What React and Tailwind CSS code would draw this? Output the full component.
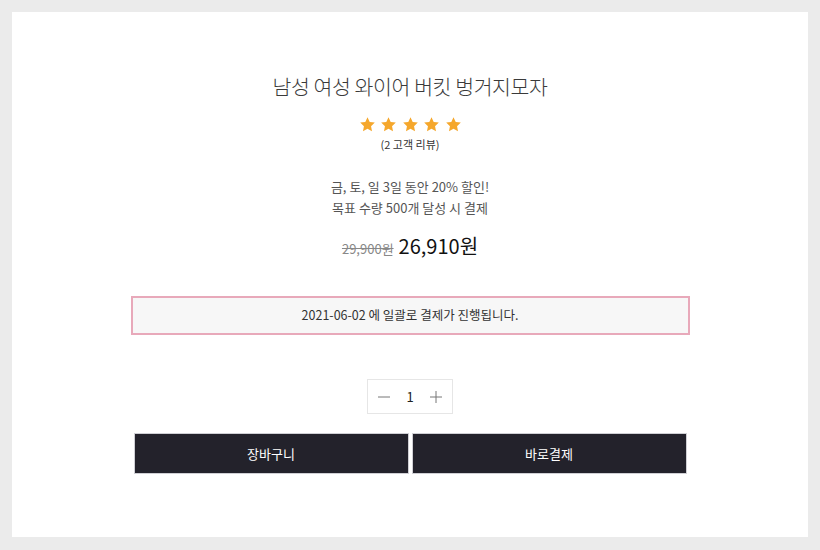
import React from "react";

const Star = () => (
  <svg width="17" height="17" viewBox="0 0 24 24" fill="#f5a72c">
    <path d="M12 1.8l3.1 6.6 7.2.9-5.3 5 1.4 7.1L12 17.9l-6.4 3.5 1.4-7.1-5.3-5 7.2-.9z" />
  </svg>
);

export default function App() {
  return (
    <div
      className="w-[820px] h-[550px] bg-[#ebebeb] pt-[12px] pl-[12px] pr-[12px] pb-[13px]"
      style={{ fontFamily: '"Noto Sans CJK KR", "Noto Sans", sans-serif' }}
    >
      <div className="w-[796px] h-[525px] bg-white flex flex-col items-center">
        <h1 className="mt-[59px] text-[20.5px] leading-[30px] text-[#3a3a3a] font-light tracking-[-0.4px]">
          남성 여성 와이어 버킷 벙거지모자
        </h1>
        <div className="mt-[15px] flex gap-[4.5px]">
          <Star />
          <Star />
          <Star />
          <Star />
          <Star />
        </div>
        <div className="mt-[3px] text-[11px] leading-[16px] text-[#333]">(2 고객 리뷰)</div>
        <div className="mt-[24px] text-[13px] leading-[21px] text-[#555] text-center">
          <div>금, 토, 일 3일 동안 20% 할인!</div>
          <div>목표 수량 500개 달성 시 결제</div>
        </div>
        <div className="mt-[13px] flex items-baseline gap-[5px]">
          <span className="text-[13px] text-[#888] line-through">29,900원</span>
          <span className="text-[20px] leading-[30px] text-[#111]">26,910원</span>
        </div>
        <div className="mt-[35px] w-[559px] h-[39px] border-2 border-[#e8a9ba] bg-[#f7f7f7] flex items-center justify-center text-[12.5px] text-[#333]">
          2021-06-02 에 일괄로 결제가 진행됩니다.
        </div>
        <div className="mt-[44px] w-[86px] h-[35px] border border-[#e6e6e6] flex items-center justify-between px-[10px] text-[#555]">
          <svg width="12" height="12" viewBox="0 0 12 12">
            <path d="M0 6h12" stroke="#777" strokeWidth="1" />
          </svg>
          <span className="text-[13px] text-[#222]">1</span>
          <svg width="12" height="12" viewBox="0 0 12 12">
            <path d="M0 6h12M6 0v12" stroke="#777" strokeWidth="1" />
          </svg>
        </div>
        <div className="mt-[19px] flex gap-[3px]">
          <button className="w-[275px] h-[41px] bg-[#23222b] border border-[#cfcfd4] text-white text-[13px]">
            장바구니
          </button>
          <button className="w-[275px] h-[41px] bg-[#23222b] border border-[#cfcfd4] text-white text-[13px]">
            바로결제
          </button>
        </div>
      </div>
    </div>
  );
}
